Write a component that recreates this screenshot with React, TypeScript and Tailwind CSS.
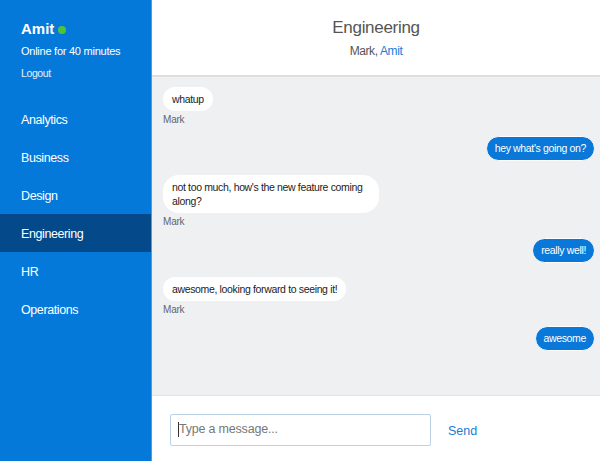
const channels = ['Analytics', 'Business', 'Design', 'Engineering', 'HR', 'Operations']

type Msg = { text: string; mine: boolean }

const messages: Msg[] = [
  { text: 'whatup', mine: false },
  { text: "hey what's going on?", mine: true },
  { text: "not too much, how's the new feature coming along?", mine: false },
  { text: 'really well!', mine: true },
  { text: 'awesome, looking forward to seeing it!', mine: false },
  { text: 'awesome', mine: true },
]

function Message({ msg }: { msg: Msg }) {
  if (msg.mine) {
    return (
      <div className="mb-[14px] flex justify-end">
        <div className="rounded-full border border-white bg-[#0a78d9] px-[8px] py-[4px] text-[10.5px] leading-[15px] tracking-[-0.35px] text-white">
          {msg.text}
        </div>
      </div>
    )
  }
  return (
    <div className="mb-[10px] flex flex-col items-start">
      <div className="max-w-[216px] rounded-[16px] bg-white px-[9px] py-[5px] text-[10.5px] leading-[14px] tracking-[-0.35px] text-[#222]">
        {msg.text}
      </div>
      <div className="mt-[2px] text-[10px] leading-[13px] tracking-[-0.2px] text-[#666]">Mark</div>
    </div>
  )
}

export default function App() {
  return (
    <div className="flex h-[461px] w-[600px] font-['Liberation_Sans',Arial,sans-serif]">
      <aside className="flex w-[152px] shrink-0 flex-col border-r border-[#4a9de6] bg-[#0579da] text-white">
        <div className="px-[21px] pt-[20px]">
          <div className="flex items-center text-[15px] font-bold leading-[18px]">
            Amit
            <span className="ml-[4px] mt-[1px] h-[8px] w-[8px] rounded-full bg-[#4cc33b]" />
          </div>
          <div className="mt-[6px] text-[11px] leading-[14px] tracking-[-0.25px]">Online for 40 minutes</div>
          <div className="mt-[8px] text-[10.5px] leading-[14px] tracking-[-0.4px] text-[#e6f0fb]">Logout</div>
        </div>
        <nav className="mt-[20px] flex flex-col">
          {channels.map((c) => (
            <div
              key={c}
              className={
                c === 'Engineering'
                  ? 'flex h-[38px] items-center bg-[#04498a] px-[21px] pt-[2px] text-[12.5px] tracking-[-0.4px]'
                  : 'flex h-[38px] items-center px-[21px] pt-[2px] text-[12.5px] tracking-[-0.4px]'
              }
            >
              {c}
            </div>
          ))}
        </nav>
      </aside>
      <main className="flex min-w-0 flex-1 flex-col">
        <header className="flex h-[77px] shrink-0 flex-col items-center border-b-2 border-[#dedede] bg-white pt-[18px]">
          <div className="text-[17px] leading-[20px] tracking-[-0.3px] text-[#555]">Engineering</div>
          <div className="mt-[6px] text-[12px] leading-[14px] tracking-[-0.4px] text-[#555]">
            Mark, <span className="text-[#1a7bd8]">Amit</span>
          </div>
        </header>
        <section className="flex-1 overflow-hidden bg-[#eff0f2] pl-[11px] pr-[5px] pt-[10px]">
          {messages.map((m, i) => (
            <Message key={i} msg={m} />
          ))}
        </section>
        <footer className="flex h-[66px] shrink-0 items-center border-t border-[#e4e4e4] bg-white pl-[18px] pt-[2px]">
          <div className="flex h-[32px] w-[261px] items-center rounded-[2px] border border-[#bcd0e6] bg-white pl-[7px]">
            <span className="h-[15px] w-px bg-[#333]" />
            <span className="text-[12.5px] tracking-[-0.2px] text-[#777]">Type a message...</span>
          </div>
          <span className="ml-[17px] mt-[3px] text-[12.5px] text-[#1a7bd8]">Send</span>
        </footer>
      </main>
    </div>
  )
}
